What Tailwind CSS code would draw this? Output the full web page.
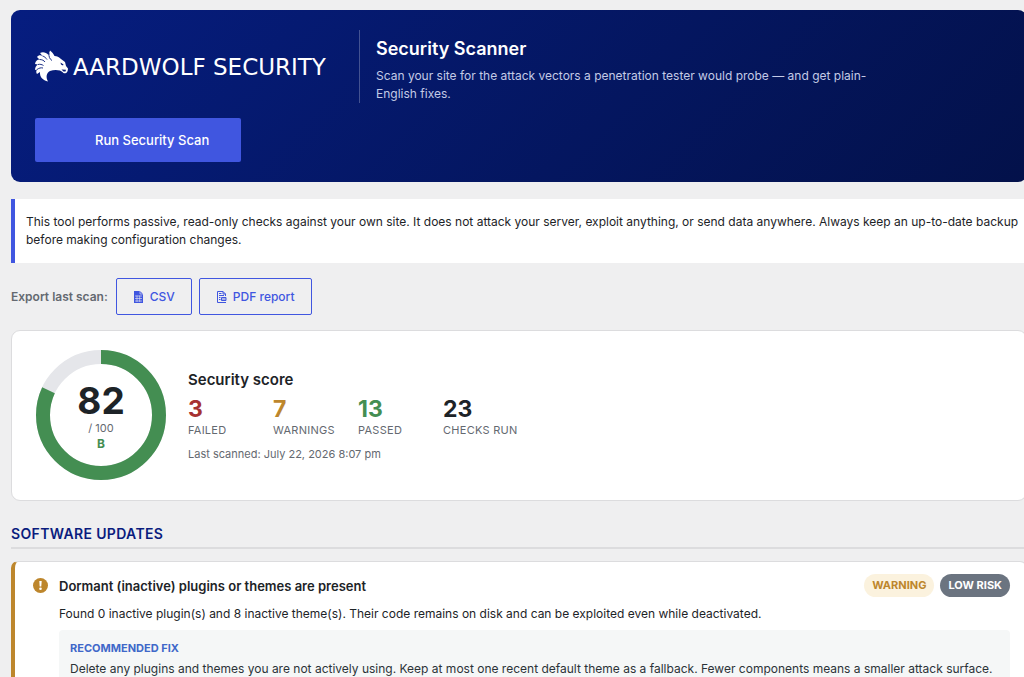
<!DOCTYPE html>
<html lang="en">
<head>
  <meta charset="UTF-8" />
  <meta name="viewport" content="width=device-width, initial-scale=1.0"/>
  <title>Aardwolf Security - Security Scanner</title>
  <script src="https://cdn.jsdelivr.net/npm/@tailwindcss/browser@4"></script>
</head>
<body class="bg-[#efeff0] font-['Inter',sans-serif] text-[#1d2327] text-[12px] leading-[18px] h-screen overflow-hidden">

  <main class="pl-[11px] pt-[10px] -mr-[3px]">

    <!-- Banner -->
    <header class="rounded-[9px] bg-linear-135 from-[#061d80] to-[#03114a] px-6 pt-5 pb-5 text-white">
      <div class="flex items-center">
        <a href="#" class="flex items-center gap-[5px] w-[324px] shrink-0">
          <svg class="w-[33px] h-[33px] shrink-0" viewBox="0 0 33 33" fill="#fff" aria-hidden="true">
            <path d="M15 0.500C17 2 18.500 4 19.500 6C22 6 24 7 26 9L30 12L31 16L33 18.500C33 21 32 23 30.500 23.300C29 23.500 28 23 27.500 22L25 20.500C21 19.500 18 20 15 21C11.500 23 10.500 27 13 31.500C8 30.500 4.500 27 5 22L2 24C1 22.500 1 21 2 19.500L0 20C0 17.500 1 15.500 3 14.500L0 14C0.500 11 2 9.500 4.500 9.500L2 7C3.500 5 5.500 5 7.500 6L5 3C7.500 1.500 11 2 13.500 5Z"/>
            <path d="M14 3C13.700 6.500 14.500 9 17 10.500M3 14.500C5 14 7 14.500 8.500 15.500M2 19.500C4 18 6 17.500 8 18M4.500 9.500C7 9.500 9 10.500 10 12M7.500 6C9.500 6.500 11 8 12 9.500" fill="none" stroke="#061c7a" stroke-width="0.900"/>
            <path d="M25.500 12.500L28.500 14.500L28 15.500L26 14.500ZM26.500 19.500L31 19.700L30.500 21.500L28.500 21.500Z" fill="#061c7a"/>
          </svg>
          <span class="font-['DejaVu_Sans',sans-serif] text-[23px] leading-6 whitespace-nowrap">AARDWOLF SECURITY</span>
        </a>
        <div class="border-l border-white/25 pl-4 pt-[7px]">
          <h1 class="text-[18px] leading-6 font-semibold">Security Scanner</h1>
          <p class="mt-1.5 max-w-[492px] text-[#c3cae6]">Scan your site for the attack vectors a penetration tester would probe — and get plain-English fixes.</p>
        </div>
      </div>
      <button type="button" class="mt-[15px] h-11 pl-[60px] pr-8 rounded-[2px] bg-[#4056e0] text-[13px] font-medium">Run Security Scan</button>
    </header>

    <!-- Notice -->
    <p class="mt-[17px] border-l-4 border-[#4056e0] bg-white pl-[11px] pr-2 py-[14px]">This tool performs passive, read-only checks against your own site. It does not attack your server, exploit anything, or send data anywhere. Always keep an up-to-date backup before making configuration changes.</p>

    <!-- Export -->
    <div class="mt-[15px] flex items-center">
      <span class="font-semibold text-[#646970] mr-2">Export last scan:</span>
      <button type="button" class="h-[37px] px-4 mr-[7px] flex items-center gap-[6px] rounded-[2px] border border-[#4056e0] text-[#4056e0] font-medium">
        <svg class="w-[11px] h-3" viewBox="0 0 11 12" aria-hidden="true">
          <path d="M1 0H7L10 3V12H1Z" fill="#4056e0"/>
          <path d="M7 0V3H10M2 5H9M2 7.500H9M2 10H9M4 4.500V11M6.700 4.500V11" fill="none" stroke="#efeff0" stroke-width="0.600"/>
        </svg>
        CSV
      </button>
      <button type="button" class="h-[37px] px-4 flex items-center gap-[6px] rounded-[2px] border border-[#4056e0] text-[#4056e0] font-medium">
        <svg class="w-[11px] h-3" viewBox="0 0 11 12" fill="none" stroke="#4056e0" aria-hidden="true">
          <path d="M9.500 5V3L7 0.500H1.500V11.500H10M7 0.500V3H9.500M3 2.500H5.500M3 4.500H8M3 6.500H4.500M3 8.500H4.500"/>
          <path d="M5.500 6.500H10V9.500H5.500Z" fill="#4056e0" fill-opacity="0.400"/>
        </svg>
        PDF report
      </button>
    </div>

    <!-- Score -->
    <section class="mt-[15px] flex items-center gap-[22px] rounded-[9px] border border-[#dcdcde] bg-white px-6 pt-[19px] pb-5">
      <div class="relative w-[130px] h-[130px] shrink-0">
        <svg class="w-full h-full -rotate-90" viewBox="0 0 130 130" fill="none" stroke-width="14" aria-hidden="true">
          <circle cx="65" cy="65" r="58" stroke="#e5e6ea"/>
          <circle cx="65" cy="65" r="58" stroke="#448e52" pathLength="100" stroke-dasharray="82 100"/>
        </svg>
        <div class="absolute inset-0 pt-1 flex flex-col items-center justify-center">
          <span class="text-[37px] leading-[38px] font-bold">82</span>
          <span class="text-[11px] leading-4 text-[#646970]">/ 100</span>
          <span class="leading-4 font-bold text-[#448e52]">B</span>
        </div>
      </div>
      <div>
        <h2 class="text-[15px] leading-6 font-semibold">Security score</h2>
        <dl class="mt-1 grid grid-cols-[repeat(4,85px)]">
          <div class="flex flex-col-reverse">
            <dt class="text-[11px] leading-4 tracking-wide whitespace-nowrap text-[#646970]">FAILED</dt>
            <dd class="text-[23px] leading-[26px] font-bold text-[#a63232]">3</dd>
          </div>
          <div class="flex flex-col-reverse">
            <dt class="text-[11px] leading-4 tracking-wide whitespace-nowrap text-[#646970]">WARNINGS</dt>
            <dd class="text-[23px] leading-[26px] font-bold text-[#bd862c]">7</dd>
          </div>
          <div class="flex flex-col-reverse">
            <dt class="text-[11px] leading-4 tracking-wide whitespace-nowrap text-[#646970]">PASSED</dt>
            <dd class="text-[23px] leading-[26px] font-bold text-[#448e52]">13</dd>
          </div>
          <div class="flex flex-col-reverse">
            <dt class="text-[11px] leading-4 tracking-wide whitespace-nowrap text-[#646970]">CHECKS RUN</dt>
            <dd class="text-[23px] leading-[26px] font-bold">23</dd>
          </div>
        </dl>
        <p class="mt-[7px] text-[11px] text-[#646970]">Last scanned: July 22, 2026 8:07 pm</p>
      </div>
    </section>

    <!-- Findings -->
    <h2 class="mt-[23px] pb-[3px] border-b-2 border-[#dcdcde] text-[14px] leading-5 font-semibold tracking-wide text-[#0a1c7e]">SOFTWARE UPDATES</h2>

    <article class="mt-3 rounded-[7px] border border-l-4 border-[#dcdcde] border-l-[#bd862c] bg-white pl-[18px] pr-4 pt-3 pb-4">
      <div class="flex items-center">
        <svg class="w-[15px] h-[15px] mr-[11px] shrink-0" viewBox="0 0 15 15" aria-hidden="true">
          <circle cx="7.500" cy="7.500" r="7.500" fill="#bd862c"/>
          <path d="M6.300 3H8.700L8.300 8.500H6.700Z" fill="#fff"/>
          <circle cx="7.500" cy="10.800" r="1.300" fill="#fff"/>
        </svg>
        <h3 class="grow text-[13px] font-semibold">Dormant (inactive) plugins or themes are present</h3>
        <div class="flex gap-[6px] text-[11px] leading-[23px] font-bold">
          <span class="rounded-full bg-[#fbf2de] px-2 text-[#bd862c]">WARNING</span>
          <span class="rounded-full bg-[#6b7480] px-2 text-white">LOW RISK</span>
        </div>
      </div>
      <div class="pl-[26px]">
        <p class="mt-2">Found 0 inactive plugin(s) and 8 inactive theme(s). Their code remains on disk and can be exploited even while deactivated.</p>
        <div class="mt-[7px] rounded-[4px] bg-[#f5f7f7] px-[11px] pt-[9px] pb-3">
          <h4 class="text-[11px] font-bold text-[#3f68c9]">RECOMMENDED FIX</h4>
          <p class="mt-[3px] text-[#2c3338]">Delete any plugins and themes you are not actively using. Keep at most one recent default theme as a fallback. Fewer components means a smaller attack surface.</p>
        </div>
      </div>
    </article>

  </main>
</body>
</html>
